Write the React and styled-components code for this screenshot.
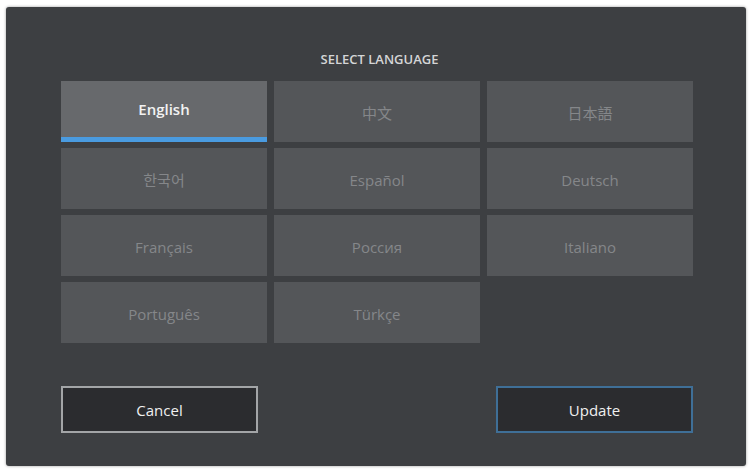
import styled, { createGlobalStyle } from "styled-components";

const Global = createGlobalStyle`
  html, body { margin: 0; background: #fff; }
  body { font-family: "Open Sans", "Noto Sans CJK SC", sans-serif; }
`;

const langs = ["English", "中文", "日本語", "한국어", "Español", "Deutsch", "Français", "Россия", "Italiano", "Português", "Türkçe"];

export default function App() {
  return (
    <>
      <Global />
      <Page>
        <Panel>
          <Title>SELECT LANGUAGE</Title>
          <Grid>
            {langs.map((l, i) => (
              <Tile key={l} $active={i === 0}>{l}</Tile>
            ))}
          </Grid>
          <Buttons>
            <Button>Cancel</Button>
            <Button $primary>Update</Button>
          </Buttons>
        </Panel>
      </Page>
    </>
  );
}

const Page = styled.div`
  width: 751px;
  height: 470px;
  padding: 7px 5px 4px 6px;
  box-sizing: border-box;
`;

const Panel = styled.div`
  height: 100%;
  background: #3d3f42;
  border-radius: 3px;
  box-shadow: 0 0 3px rgba(0,0,0,0.4);
  padding: 0 48px 0 55px;
  box-sizing: border-box;
  display: flex;
  flex-direction: column;
`;

const Title = styled.div`
  text-align: center;
  color: #d4d5d6;
  font-size: 13px;
  font-weight: 600;
  margin: 43px 0 13px;
  line-height: 18px;
`;

const Grid = styled.div`
  display: grid;
  grid-template-columns: repeat(3, 206px);
  grid-auto-rows: 61px;
  gap: 6px 7px;
`;

const Tile = styled.div`
  background: ${p => (p.$active ? "#67696c" : "#545659")};
  color: ${p => (p.$active ? "#f2f2f2" : "#85878a")};
  font-size: 15px;
  font-weight: ${p => (p.$active ? 600 : 400)};
  display: flex;
  align-items: center;
  justify-content: center;
  box-sizing: border-box;
  border-bottom: ${p => (p.$active ? "5px solid #4a9be0" : "none")};
  padding-top: ${p => (p.$active ? "0" : "2px")};
`;

const Buttons = styled.div`
  width: 632px;
  display: flex;
  justify-content: space-between;
  margin-top: 43px;
`;

const Button = styled.div`
  width: 197px;
  height: 47px;
  box-sizing: border-box;
  background: #2b2c2f;
  border: 2px solid ${p => (p.$primary ? "#3f6f97" : "#a3a5a7")};
  color: #f0f0f0;
  font-size: 15px;
  display: flex;
  align-items: center;
  justify-content: center;
`;
